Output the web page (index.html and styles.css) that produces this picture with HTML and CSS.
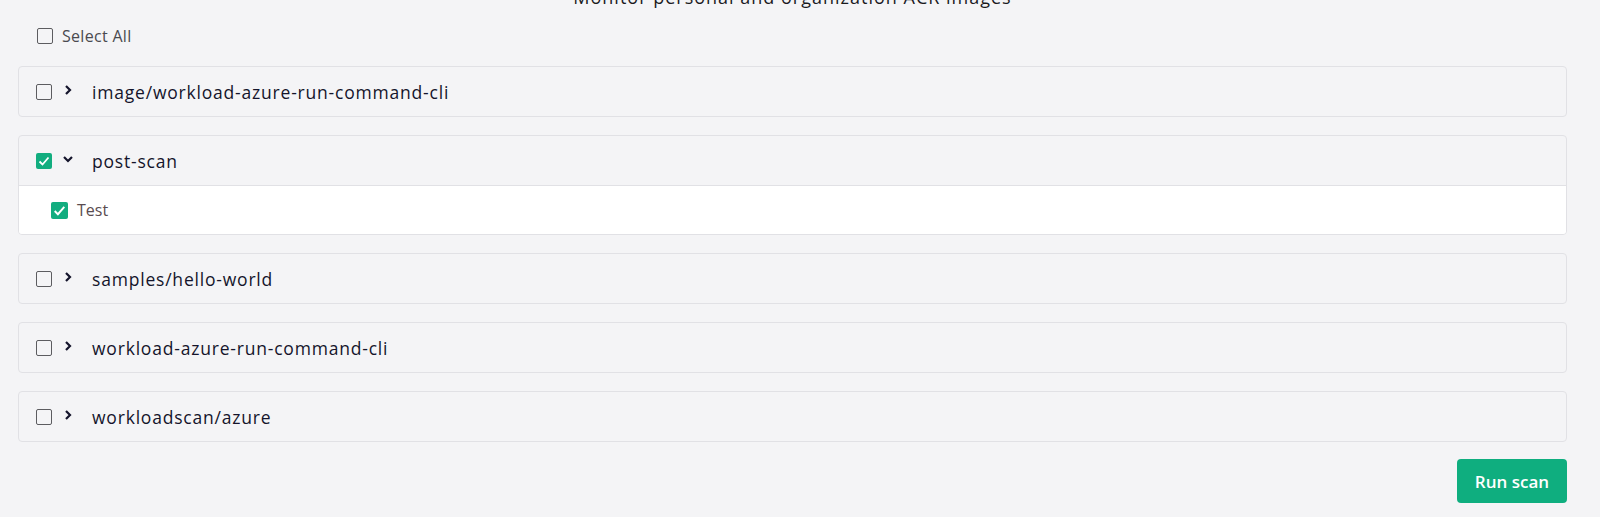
FILE: index.html
```html
<!DOCTYPE html>
<html lang="en">
<head>
  <meta charset="UTF-8">
  <title>ACR images</title>
  <link rel="stylesheet" href="styles.css">
</head>
<body>

  <div class="page">
    <h2 class="title">Monitor personal and organization ACR images</h2>

    <label class="select-all">
      <span class="box"></span>
      <span>Select All</span>
    </label>

    <div class="repo">
      <div class="repo-head">
        <span class="box"></span>
        <svg class="chevron" viewBox="0 0 12 12"><polyline points="4,2 8,6 4,10"/></svg>
        <span class="repo-name">image/workload-azure-run-command-cli</span>
      </div>
    </div>

    <div class="repo">
      <div class="repo-head">
        <span class="box checked"><svg viewBox="0 0 16 16"><polyline points="3.5,8.5 6.5,11.5 12.5,4.5"/></svg></span>
        <svg class="chevron" viewBox="0 0 12 12"><polyline points="2,4 6,8 10,4"/></svg>
        <span class="repo-name">post-scan</span>
      </div>
      <div class="repo-body">
        <label class="tag">
          <span class="box checked"><svg viewBox="0 0 16 16"><polyline points="3.5,8.5 6.5,11.5 12.5,4.5"/></svg></span>
          <span>Test</span>
        </label>
      </div>
    </div>

    <div class="repo">
      <div class="repo-head">
        <span class="box"></span>
        <svg class="chevron" viewBox="0 0 12 12"><polyline points="4,2 8,6 4,10"/></svg>
        <span class="repo-name">samples/hello-world</span>
      </div>
    </div>

    <div class="repo">
      <div class="repo-head">
        <span class="box"></span>
        <svg class="chevron" viewBox="0 0 12 12"><polyline points="4,2 8,6 4,10"/></svg>
        <span class="repo-name">workload-azure-run-command-cli</span>
      </div>
    </div>

    <div class="repo">
      <div class="repo-head">
        <span class="box"></span>
        <svg class="chevron" viewBox="0 0 12 12"><polyline points="4,2 8,6 4,10"/></svg>
        <span class="repo-name">workloadscan/azure</span>
      </div>
    </div>

    <div class="actions">
      <button class="btn-run">Run scan</button>
    </div>
  </div>

</body>
</html>
```

FILE: styles.css
```css
body {
  margin: 0;
  background-color: #f4f4f6;
  font-family: 'Open Sans', sans-serif;
  color: #14142b;
}

.page {
  padding: 0 33px 0 18px;
}

.title {
  margin: -13px 0 0;
  height: 20px;
  line-height: 20px;
  text-align: center;
  font-size: 18px;
  font-weight: normal;
  letter-spacing: 1px;
  color: #1b1b1f;
}

.select-all {
  display: flex;
  align-items: center;
  gap: 9px;
  height: 17px;
  margin: 20px 0 22px 19px;
  font-size: 16px;
  letter-spacing: 0.3px;
  color: #4a4a4f;
}

.box {
  box-sizing: border-box;
  width: 16px;
  height: 16px;
  border: 1.5px solid #5c5c60;
  border-radius: 2px;
  flex-shrink: 0;
  display: flex;
}

.box.checked {
  border: none;
  background-color: #12ad7f;
}

.box svg {
  width: 100%;
  height: 100%;
  fill: none;
  stroke: #fff;
  stroke-width: 1.8;
}

.repo {
  border: 1px solid #e1e1e5;
  border-radius: 4px;
  margin-bottom: 18px;
  overflow: hidden;
}

.repo-head {
  display: flex;
  align-items: center;
  height: 49px;
  padding-left: 17px;
}

.chevron {
  width: 12px;
  height: 12px;
  margin: -3px 0 0 10px;
  fill: none;
  stroke: #14142b;
  stroke-width: 2.2;
}

.repo-name {
  margin-left: 18px;
  font-size: 17.5px;
  letter-spacing: 0.8px;
}

.repo-body {
  background-color: #fff;
  border-top: 1px solid #e1e1e5;
  height: 48px;
  display: flex;
  align-items: center;
  padding-left: 32px;
}

.tag {
  display: flex;
  align-items: center;
  gap: 9px;
  font-size: 16px;
  color: #5a4c50;
}

.tag .box {
  width: 17px;
  height: 17px;
}

.actions {
  display: flex;
  justify-content: flex-end;
  margin-top: -1px;
}

.btn-run {
  width: 110px;
  height: 44px;
  border: none;
  border-radius: 4px;
  background-color: #0fae7f;
  color: #fff;
  font-family: 'Open Sans', sans-serif;
  font-size: 17px;
  font-weight: 600;
  cursor: pointer;
}
```
